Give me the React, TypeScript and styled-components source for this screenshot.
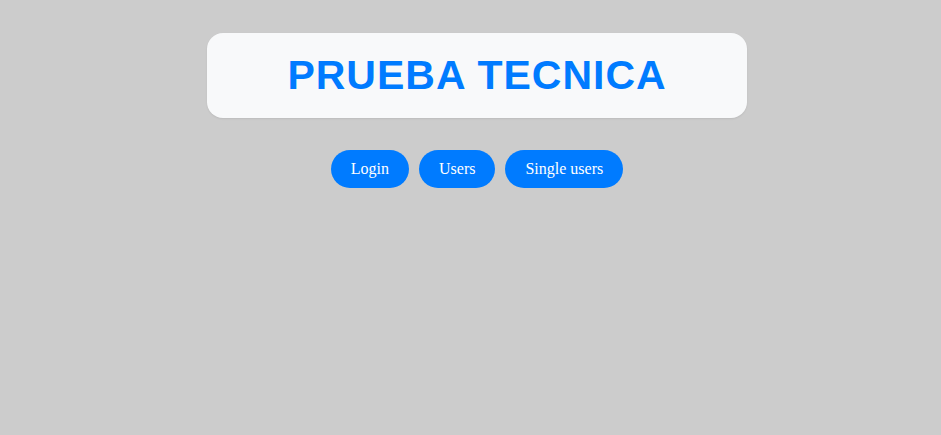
import React from "react";
import styled, { createGlobalStyle } from "styled-components";

const GlobalStyle = createGlobalStyle`
  html, body {
    margin: 0;
    padding: 0;
    background: #cccccc;
  }
  body {
    font-family: "Liberation Serif", "Times New Roman", serif;
  }
`;

const Page = styled.div`
  display: flex;
  flex-direction: column;
  align-items: center;
  padding: 33px 0 0 13px;
  min-height: 435px;
  box-sizing: border-box;
`;

const Header = styled.header`
  width: 540px;
  height: 85px;
  box-sizing: border-box;
  background: #f8f9fa;
  border-radius: 16px;
  box-shadow: 0 1px 2px rgba(0, 0, 0, 0.08);
  display: flex;
  align-items: center;
  justify-content: center;
`;

const Title = styled.h1`
  margin: 0;
  font-family: "Liberation Sans", Arial, sans-serif;
  font-weight: 700;
  font-size: 41px;
  letter-spacing: 1px;
  color: #007bff;
  line-height: 1;
`;

const Nav = styled.nav`
  display: flex;
  gap: 10px;
  margin-top: 32px;
`;

const NavButton = styled.button`
  height: 38px;
  padding: 0 20px;
  border: none;
  border-radius: 19px;
  background: #007bff;
  color: #ffffff;
  font-family: "Liberation Serif", "Times New Roman", serif;
  font-size: 16px;
  cursor: pointer;
`;

export default function App() {
  return (
    <>
      <GlobalStyle />
      <Page>
        <Header>
          <Title>PRUEBA TECNICA</Title>
        </Header>
        <Nav>
          <NavButton>Login</NavButton>
          <NavButton>Users</NavButton>
          <NavButton>Single users</NavButton>
        </Nav>
      </Page>
    </>
  );
}
